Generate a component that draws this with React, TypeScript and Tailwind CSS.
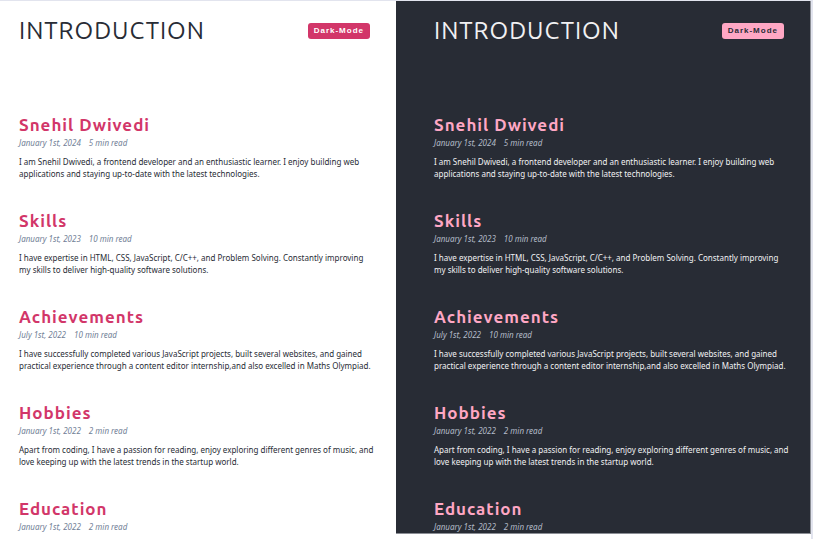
type Post = { title: string; date: string; length: string; snippet?: string };

const posts: Post[] = [
  {
    title: "Snehil Dwivedi",
    date: "January 1st, 2024",
    length: "5 min read",
    snippet:
      "I am Snehil Dwivedi, a frontend developer and an enthusiastic learner. I enjoy building web applications and staying up-to-date with the latest technologies.",
  },
  {
    title: "Skills",
    date: "January 1st, 2023",
    length: "10 min read",
    snippet:
      "I have expertise in HTML, CSS, JavaScript, C/C++, and Problem Solving. Constantly improving my skills to deliver high-quality software solutions.",
  },
  {
    title: "Achievements",
    date: "July 1st, 2022",
    length: "10 min read",
    snippet:
      "I have successfully completed various JavaScript projects, built several websites, and gained practical experience through a content editor internship,and also excelled in Maths Olympiad.",
  },
  {
    title: "Hobbies",
    date: "January 1st, 2022",
    length: "2 min read",
    snippet:
      "Apart from coding, I have a passion for reading, enjoy exploring different genres of music, and love keeping up with the latest trends in the startup world.",
  },
  { title: "Education", date: "January 1st, 2022", length: "2 min read" },
];

const themes = {
  light: {
    panel: "bg-white pl-[19px] text-[#282c35]",
    button: "bg-[#d23669] text-white",
    title: "text-[#d23669]",
    meta: "text-[#718096]",
  },
  dark: {
    panel: "border-r border-b border-[#8b8e95] bg-[#282c35] pl-[38px] text-[#f1f1f3]",
    button: "bg-[#ffa7c4] text-[#282c35]",
    title: "text-[#ffa7c4]",
    meta: "text-[#b4bcc9]",
  },
};

function Panel({ theme }: { theme: keyof typeof themes }) {
  const t = themes[theme];
  return (
    <section className={`pt-[14px] pr-5 ${t.panel}`}>
      <header className="flex items-center justify-between pr-[6px]">
        <h1 className="text-[24px] leading-[32px] tracking-[1px]">INTRODUCTION</h1>
        <button
          type="button"
          className={`h-4 rounded-[3px] px-[6px] font-['Liberation_Sans',Arial,sans-serif] text-[8px] leading-4 font-bold tracking-[1px] ${t.button}`}
        >
          Dark-Mode
        </button>
      </header>
      <div className="mt-[66px] flex flex-col gap-[29px]">
        {posts.map((post) => (
          <article key={post.title}>
            <h2 className={`text-[17px] leading-[24px] font-bold tracking-[1px] ${t.title}`}>
              {post.title}
            </h2>
            <p
              className={`flex gap-2 font-['Noto_Sans',sans-serif] text-[8px] leading-[12px] italic ${t.meta}`}
            >
              <span>{post.date}</span>
              <span>{post.length}</span>
            </p>
            {post.snippet && (
              <p className="mt-[7px] font-['Noto_Sans',sans-serif] text-[8px] leading-[12px]">
                {post.snippet}
              </p>
            )}
          </article>
        ))}
      </div>
    </section>
  );
}

export default function App() {
  return (
    <main className="border-t border-r-2 border-[#e2e4ee] bg-white font-[Ubuntu,'Noto_Sans','Open_Sans',sans-serif]">
      <div className="grid min-h-screen grid-cols-[396fr_415fr] items-start">
        <Panel theme="light" />
        <Panel theme="dark" />
      </div>
    </main>
  );
}
